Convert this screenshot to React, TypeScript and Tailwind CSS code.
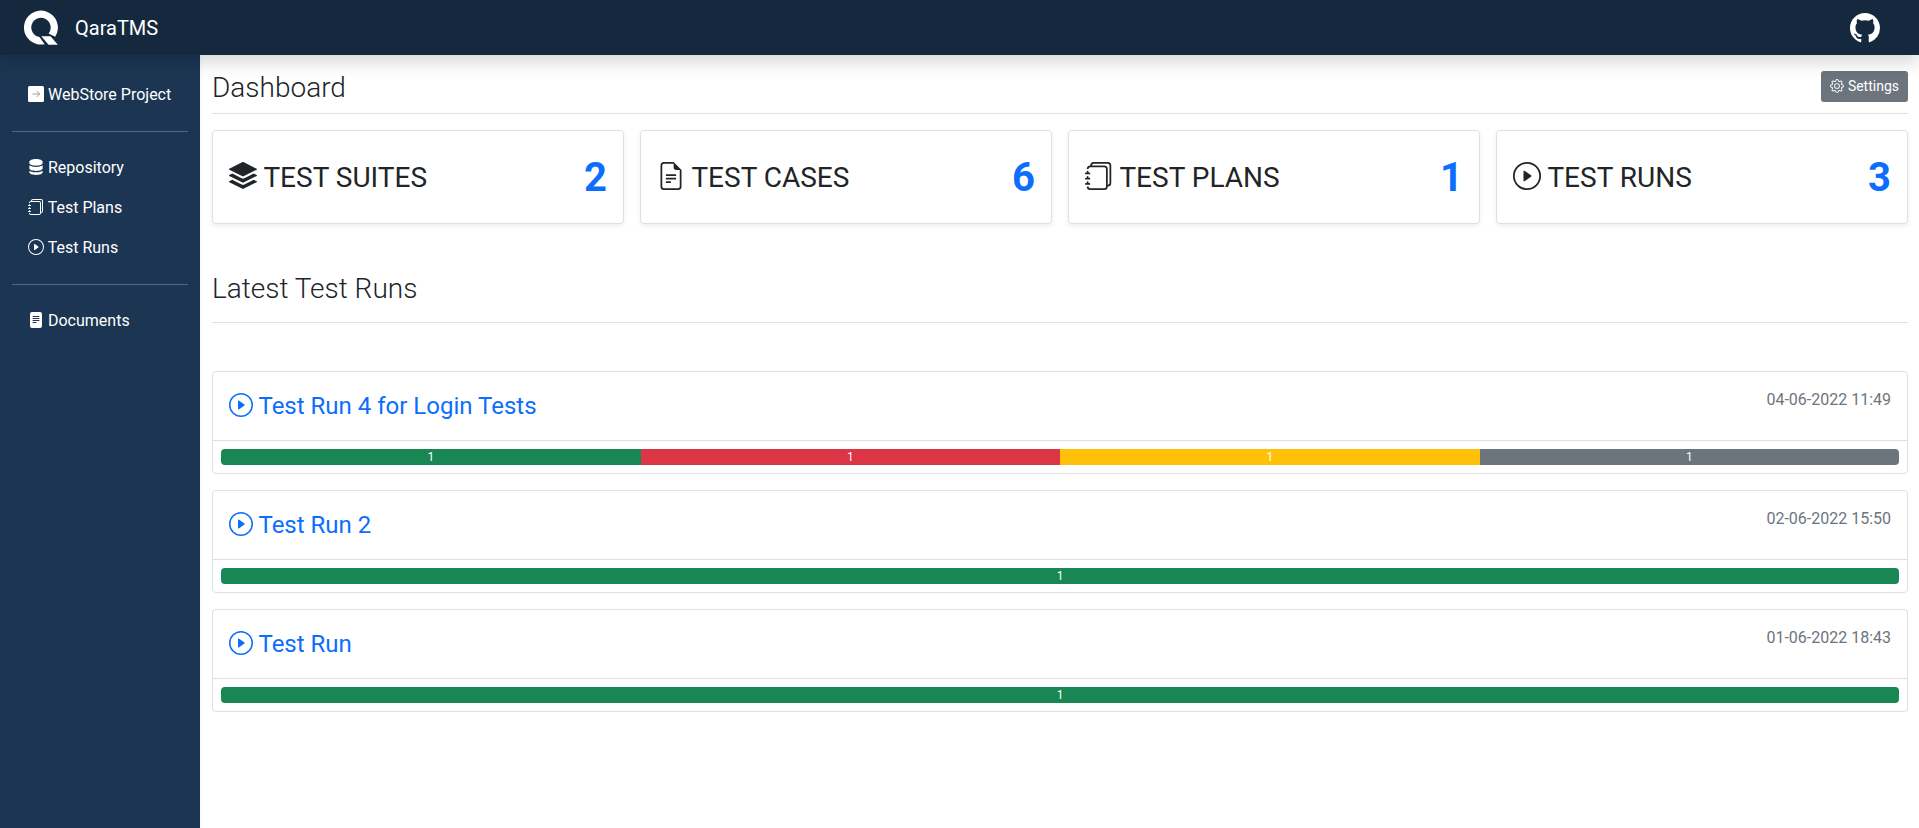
import type { ComponentType, ReactNode } from "react";
import {
  BsFileEarmarkText,
  BsFileTextFill,
  BsGear,
  BsGithub,
  BsJournals,
  BsPlayCircle,
  BsServer,
  BsStack,
} from "react-icons/bs";

type Icon = ComponentType<{ className?: string }>;

type Segment = {
  status: "passed" | "failed" | "blocked" | "not-tested";
  count: number;
};

type TestRun = {
  title: string;
  date: string;
  segments: Segment[];
};

const SEGMENT_COLORS: Record<Segment["status"], string> = {
  passed: "bg-[#198754]",
  failed: "bg-[#dc3545]",
  blocked: "bg-[#ffc107]",
  "not-tested": "bg-[#6c757d]",
};

const STATS: { label: string; value: number; icon: Icon }[] = [
  { label: "TEST SUITES", value: 2, icon: BsStack },
  { label: "TEST CASES", value: 6, icon: BsFileEarmarkText },
  { label: "TEST PLANS", value: 1, icon: BsJournals },
  { label: "TEST RUNS", value: 3, icon: BsPlayCircle },
];

const RUNS: TestRun[] = [
  {
    title: "Test Run 4 for Login Tests",
    date: "04-06-2022 11:49",
    segments: [
      { status: "passed", count: 1 },
      { status: "failed", count: 1 },
      { status: "blocked", count: 1 },
      { status: "not-tested", count: 1 },
    ],
  },
  {
    title: "Test Run 2",
    date: "02-06-2022 15:50",
    segments: [{ status: "passed", count: 1 }],
  },
  {
    title: "Test Run",
    date: "01-06-2022 18:43",
    segments: [{ status: "passed", count: 1 }],
  },
];

function Logo() {
  return (
    <svg viewBox="0 0 34 35" className="h-[35px] w-[34px]" fill="#fff" aria-hidden="true">
      <path d="M20 34.3A17 17 0 1 1 31.2 26.8L24.6 23.5A9.7 9.7 0 1 0 15.5 27.1L21 34.7Z" />
      <path d="M17.3 26.2h9.2l7.3 8.5h-9.3Z" />
    </svg>
  );
}

/** Filled square with a thin, pale arrow. */
function ProjectIcon({ className }: { className?: string }) {
  return (
    <svg viewBox="0 0 16 16" width="1em" height="1em" className={className} aria-hidden="true">
      <rect width="16" height="16" rx="1.5" fill="#fff" />
      <path d="M4.5 8h7M8.7 5l3 3-3 3" fill="none" stroke="#9a9ea3" strokeWidth="1" />
    </svg>
  );
}

function Navbar() {
  return (
    <header className="relative z-10 flex h-[55px] items-center justify-between bg-[#15293e] pr-[39px] pl-6 shadow-[0_8px_16px_rgba(0,0,0,0.15)]">
      <a href="#" className="flex items-center gap-[17px] text-xl text-white">
        <Logo />
        <span>QaraTMS</span>
      </a>
      <a href="#" aria-label="GitHub" className="text-3xl text-white">
        <BsGithub />
      </a>
    </header>
  );
}

function NavItem({ icon: Icon, children }: { icon: Icon; children: ReactNode }) {
  return (
    <li>
      <a href="#" className="block px-4 py-2 text-white">
        <Icon className="inline align-[-2px]" /> {children}
      </a>
    </li>
  );
}

function Sidebar() {
  return (
    <nav className="w-[200px] shrink-0 bg-[#1b3552] px-3 pt-5 shadow-[0_2px_4px_rgba(0,0,0,0.075)]">
      <ul>
        <NavItem icon={ProjectIcon}>WebStore Project</NavItem>
      </ul>
      <hr className="my-4 border-white/25" />
      <ul>
        <NavItem icon={BsServer}>Repository</NavItem>
        <NavItem icon={BsJournals}>Test Plans</NavItem>
        <NavItem icon={BsPlayCircle}>Test Runs</NavItem>
      </ul>
      <hr className="my-4 border-white/25" />
      <ul>
        <NavItem icon={BsFileTextFill}>Documents</NavItem>
      </ul>
    </nav>
  );
}

function RunCard({ run }: { run: TestRun }) {
  const total = run.segments.reduce((sum, s) => sum + s.count, 0);

  return (
    <article className="rounded border border-[#dfdfdf] bg-white">
      <div className="flex items-start justify-between border-b border-[#dfdfdf] p-4">
        <h4 className="text-2xl leading-[36px]">
          <a href="#" className="text-[#0d6efd]">
            <BsPlayCircle className="inline align-[-3px]" /> {run.title}
          </a>
        </h4>
        <span className="text-[#6c757d]">{run.date}</span>
      </div>
      <div className="p-2">
        <div className="flex h-4 overflow-hidden rounded text-xs text-white">
          {run.segments.map((s) => (
            <div
              key={s.status}
              className={`flex items-center justify-center ${SEGMENT_COLORS[s.status]}`}
              style={{ width: `${(s.count / total) * 100}%` }}
            >
              {s.count}
            </div>
          ))}
        </div>
      </div>
    </article>
  );
}

export default function App() {
  return (
    <div className="flex min-h-screen flex-col bg-white font-[Roboto,sans-serif] text-base text-[#212529]">
      <Navbar />
      <div className="flex grow">
        <Sidebar />
        <main className="min-w-0 grow pr-[11px] pl-3">
          <div className="flex items-start justify-between border-b border-[#dfdfdf] pt-4 pb-2">
            <h1 className="text-[28px] leading-[34px] font-light">Dashboard</h1>
            <button
              type="button"
              className="rounded-[3px] bg-[#6c757d] px-[9px] py-[5px] text-sm leading-[21px] text-white"
            >
              <BsGear className="inline align-[-2px]" /> Settings
            </button>
          </div>

          <section className="mt-4 grid grid-cols-4 gap-4">
            {STATS.map(({ label, value, icon: Icon }) => (
              <div
                key={label}
                className="flex items-center justify-between rounded border border-[#dfdfdf] bg-white px-4 pt-[23px] pb-[21px] shadow-[0_2px_4px_rgba(0,0,0,0.075)]"
              >
                <h2 className="text-[28px] leading-[34px]">
                  <Icon className="inline align-[-3px]" /> {label}
                </h2>
                <span className="text-[40px] leading-[48px] font-bold text-[#0d6efd]">{value}</span>
              </div>
            ))}
          </section>

          <h2 className="mt-12 border-b border-[#dfdfdf] pb-4 text-[28px] leading-[34px] font-light">
            Latest Test Runs
          </h2>

          <section className="mt-12 flex flex-col gap-4">
            {RUNS.map((run) => (
              <RunCard key={run.title} run={run} />
            ))}
          </section>
        </main>
      </div>
    </div>
  );
}
